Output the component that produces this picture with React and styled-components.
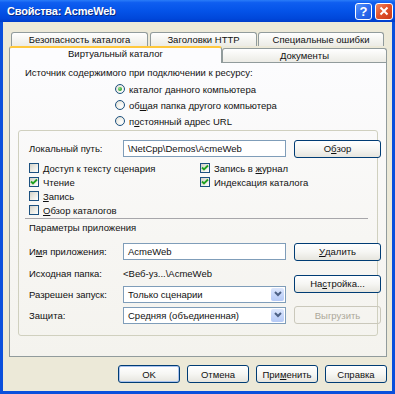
import React from 'react';
import styled, { createGlobalStyle } from 'styled-components';

const GlobalStyle = createGlobalStyle`
  html, body {
    margin: 0;
    padding: 0;
    background: #fff;
  }
  body {
    font-family: "Liberation Sans", Arial, sans-serif;
    font-size: 9.5px;
    color: #111;
  }
`;

const Window = styled.div`
  width: 395px;
  height: 394px;
  display: flex;
  flex-direction: column;
  background: #0a4fdc;
  box-sizing: border-box;
`;

const TitleBar = styled.div`
  height: 22px;
  flex: none;
  display: flex;
  align-items: center;
  padding: 0 2px 0 7px;
  background: linear-gradient(180deg, #2a7cf8 0%, #0f5ef0 12%, #0453e8 50%, #0047da 85%, #003cc9 100%);
`;

const Title = styled.div`
  flex: 1;
  color: #fff;
  font-weight: bold;
  font-size: 11px;
  letter-spacing: -0.2px;
  text-shadow: 1px 1px 0 #0a2a80;
`;

const CaptionButton = styled.div`
  width: ${({ $w }) => $w}px;
  height: 17px;
  margin-left: ${({ $gap }) => $gap || 0}px;
  box-sizing: border-box;
  border: 1px solid #fff;
  border-radius: 3px;
  display: flex;
  align-items: center;
  justify-content: center;
  color: #fff;
  font-weight: bold;
  font-size: 13px;
  background: ${({ $close }) =>
    $close
      ? 'linear-gradient(135deg, #f08a68 0%, #e2532c 45%, #c9391a 100%)'
      : 'linear-gradient(135deg, #5c98fa 0%, #2f6ef0 45%, #1d56dc 100%)'};
`;

const Body = styled.div`
  flex: 1;
  margin: 0 3px 3px 3px;
  background: #ece9d8;
  padding: 10px 5px 0 6px;
  display: flex;
  flex-direction: column;
`;

const TabRow = styled.div`
  display: flex;
  align-items: flex-end;
  height: ${({ $h }) => $h}px;
  padding-left: ${({ $indent }) => $indent || 0}px;
`;

const Tab = styled.div`
  width: ${({ $w }) => $w}px;
  margin-left: ${({ $gap }) => $gap || 0}px;
  height: ${({ $active }) => ($active ? 17 : 14)}px;
  box-sizing: border-box;
  border: 1px solid #919b9c;
  border-bottom: none;
  border-top: ${({ $active }) => ($active ? '2px solid #ffc83c' : '1px solid #919b9c')};
  border-radius: 3px 3px 0 0;
  background: ${({ $active }) =>
    $active ? '#fcfcfe' : 'linear-gradient(180deg, #ffffff 0%, #f3f3ef 60%, #ecebe6 100%)'};
  display: flex;
  align-items: ${({ $active }) => ($active ? 'flex-start' : 'center')};
  justify-content: center;
  white-space: nowrap;
  position: relative;
  z-index: ${({ $active }) => ($active ? 2 : 1)};
  margin-bottom: ${({ $active }) => ($active ? -1 : 0)}px;
  line-height: 12px;
`;

const Panel = styled.div`
  height: 295px;
  flex: none;
  box-sizing: border-box;
  border: 1px solid #919b9c;
  background: linear-gradient(180deg, #fcfcfe 0%, #f7f6f3 60%, #f4f3ee 100%);
  display: flex;
  flex-direction: column;
`;

const Caption = styled.div`
  line-height: 12px;
  margin: ${({ $m }) => $m};
  white-space: nowrap;
`;

const RadioList = styled.div`
  margin: 2px 0 0 105px;
  display: flex;
  flex-direction: column;
`;

const OptionRow = styled.div`
  height: ${({ $h }) => $h || 16}px;
  display: flex;
  align-items: center;
  gap: 4px;
  white-space: nowrap;
`;

const RadioDot = styled.span`
  width: 10px;
  height: 10px;
  box-sizing: border-box;
  border: 1px solid #1c5180;
  border-radius: 50%;
  background: radial-gradient(circle at 65% 65%, #ffffff 0%, #eeede6 55%, #d6d5cc 100%);
  display: flex;
  align-items: center;
  justify-content: center;

  &::after {
    content: '';
    display: ${({ $on }) => ($on ? 'block' : 'none')};
    width: 4px;
    height: 4px;
    border-radius: 50%;
    background: radial-gradient(circle at 35% 35%, #8ee08a 0%, #2fa52c 70%);
  }
`;

const CheckBox = styled.span`
  width: 10px;
  height: 10px;
  flex: none;
  box-sizing: border-box;
  border: 1px solid #1c5180;
  background: linear-gradient(135deg, #d2d1c8 0%, #ebeae3 50%, #ffffff 100%);
  display: flex;
  align-items: center;
  justify-content: center;
`;

const GroupBox = styled.div`
  margin: 1px 8px 0 8px;
  height: 206px;
  box-sizing: border-box;
  border: 1px solid #d0d0bf;
  border-radius: 3px;
  padding: 8px 4px 10px 10px;
  display: flex;
  flex-direction: column;
`;

const FieldRow = styled.div`
  display: grid;
  grid-template-columns: 86px 163px 87px;
  column-gap: 8px;
  align-items: center;
  height: 19px;
`;

const Label = styled.div`
  white-space: nowrap;
`;

const TextBox = styled.div`
  height: 17px;
  box-sizing: border-box;
  border: 1px solid #7f9db9;
  background: #fff;
  padding: 0 4px;
  display: flex;
  align-items: center;
  white-space: nowrap;
  overflow: hidden;
`;

const Combo = styled(TextBox)`
  padding: 0 1px 0 4px;
  justify-content: space-between;
`;

const ComboArrow = styled.span`
  width: 13px;
  height: 13px;
  border-radius: 2px;
  background: linear-gradient(180deg, #dde7fc 0%, #c3d4f9 60%, #b5c9f5 100%);
  display: flex;
  align-items: center;
  justify-content: center;
`;

const Button = styled.div`
  height: 18px;
  width: ${({ $w }) => ($w ? `${$w}px` : 'auto')};
  box-sizing: border-box;
  border: 1px solid ${({ $disabled }) => ($disabled ? '#cac8bb' : '#003c74')};
  border-radius: 3px;
  background: ${({ $disabled }) =>
    $disabled ? 'transparent' : 'linear-gradient(180deg, #ffffff 0%, #f6f6f3 50%, #e6e5de 100%)'};
  box-shadow: ${({ $default }) => ($default ? 'inset 0 0 0 1px #a9c2ee' : 'none')};
  color: ${({ $disabled }) => ($disabled ? '#aca899' : '#111')};
  display: flex;
  align-items: center;
  justify-content: center;
  white-space: nowrap;
  align-self: ${({ $self }) => $self || 'auto'};
`;

const Checks = styled.div`
  margin-top: 3px;
  display: grid;
  grid-template-columns: 171px 1fr;
`;

const CheckColumn = styled.div`
  display: flex;
  flex-direction: column;
`;

const Separator = styled.div`
  height: 1px;
  background: #a7a6aa;
  margin: 1px 5px 0 -4px;
`;

const AppGrid = styled.div`
  margin-top: 8px;
  display: grid;
  grid-template-columns: 86px 163px 87px;
  grid-template-rows: 19px 18px 18px 18px;
  column-gap: 8px;
  row-gap: 3px;
  align-items: center;
`;

const DialogButtons = styled.div`
  margin-top: 8px;
  display: flex;
  justify-content: flex-end;
  gap: 7px;
`;

const Check = ({ on, children }) => (
  <OptionRow $h={14}>
    <CheckBox>
      {on && (
        <svg width="8" height="8" viewBox="0 0 8 8">
          <path d="M1 3.5 L3 5.5 L7 1.5" stroke="#21a121" strokeWidth="1.8" fill="none" />
        </svg>
      )}
    </CheckBox>
    <span>{children}</span>
  </OptionRow>
);

const Radio = ({ on, children }) => (
  <OptionRow>
    <RadioDot $on={on} />
    <span>{children}</span>
  </OptionRow>
);

const Chevron = () => (
  <svg width="8" height="6" viewBox="0 0 8 6">
    <path d="M1 1 L4 4 L7 1" stroke="#4d6185" strokeWidth="2" fill="none" />
  </svg>
);

export default function App() {
  return (
    <>
      <GlobalStyle />
      <Window>
        <TitleBar>
          <Title>Свойства: AcmeWeb</Title>
          <CaptionButton $w={17}>?</CaptionButton>
          <CaptionButton $w={18} $gap={3} $close>
            <svg width="10" height="10" viewBox="0 0 10 10">
              <path d="M1.5 1.5 L8.5 8.5 M8.5 1.5 L1.5 8.5" stroke="#fff" strokeWidth="2" />
            </svg>
          </CaptionButton>
        </TitleBar>

        <Body>
          <TabRow $h={14} $indent={2}>
            <Tab $w={137}>Безопасность каталога</Tab>
            <Tab $w={107} $gap={2}>Заголовки HTTP</Tab>
            <Tab $w={126} $gap={1}>Специальные ошибки</Tab>
          </TabRow>
          <TabRow $h={16}>
            <Tab $w={213} $active>Виртуальный каталог</Tab>
            <Tab $w={165}>Документы</Tab>
          </TabRow>

          <Panel>
            <Caption $m="4px 0 0 15px">Источник содержимого при подключении к ресурсу:</Caption>
            <RadioList>
              <Radio on>каталог данного компьютера</Radio>
              <Radio>об<u>щ</u>ая папка другого компьютера</Radio>
              <Radio>п<u>о</u>стоянный адрес URL</Radio>
            </RadioList>

            <GroupBox>
              <FieldRow>
                <Label>Локальный путь:</Label>
                <TextBox>\NetCpp\Demos\AcmeWeb</TextBox>
                <Button>О<u>б</u>зор</Button>
              </FieldRow>

              <Checks>
                <CheckColumn>
                  <Check>Доступ к тексту сценария</Check>
                  <Check on>Чтение</Check>
                  <Check><u>З</u>апись</Check>
                  <Check><u>О</u>бзор каталогов</Check>
                </CheckColumn>
                <CheckColumn>
                  <Check on>Запись в <u>ж</u>урнал</Check>
                  <Check on>Индексация каталога</Check>
                </CheckColumn>
              </Checks>

              <Separator />
              <Caption $m="3px 0 0 0">Параметры приложения</Caption>

              <AppGrid>
                <Label>И<u>м</u>я приложения:</Label>
                <TextBox>AcmeWeb</TextBox>
                <Button><u>У</u>далить</Button>

                <Label>Исходная папка:</Label>
                <Label>&lt;Веб-уз...\AcmeWeb</Label>
                <Button style={{ gridRow: '2 / span 2', gridColumn: 3 }} $self="center">
                  На<u>с</u>тройка...
                </Button>

                <Label>Разрешен запуск:</Label>
                <Combo>
                  Только сценарии
                  <ComboArrow><Chevron /></ComboArrow>
                </Combo>

                <Label>Защита:</Label>
                <Combo>
                  Средняя (объединенная)
                  <ComboArrow><Chevron /></ComboArrow>
                </Combo>
                <Button $disabled>Выгрузить</Button>
              </AppGrid>
            </GroupBox>
          </Panel>

          <DialogButtons>
            <Button $w={62} $default>OK</Button>
            <Button $w={62}>Отмена</Button>
            <Button $w={62}>При<u>м</u>енить</Button>
            <Button $w={62}>Справка</Button>
          </DialogButtons>
        </Body>
      </Window>
    </>
  );
}
